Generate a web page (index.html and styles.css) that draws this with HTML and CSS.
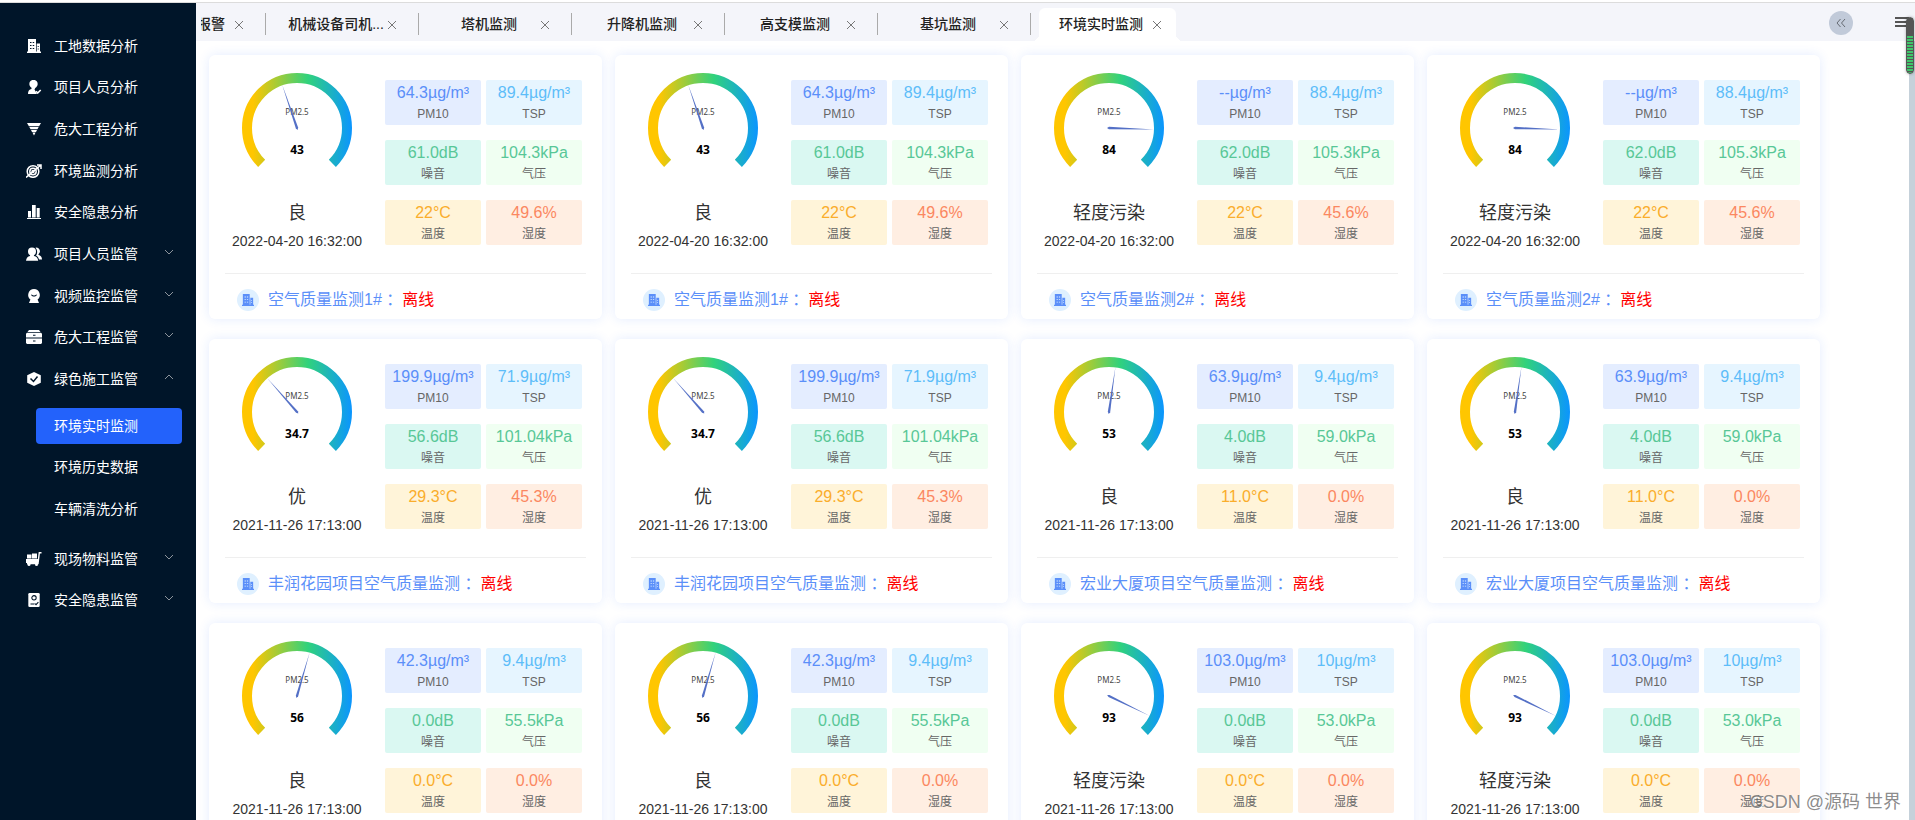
FILE: index.html
```html
<!DOCTYPE html>
<html lang="zh-CN">
<head>
<meta charset="utf-8">
<title>环境实时监测</title>
<link rel="stylesheet" href="styles.css">
</head>
<body>
<svg class="defs" aria-hidden="true">
  <defs>
    <linearGradient id="dial" gradientUnits="userSpaceOnUse" x1="5" y1="0" x2="115" y2="0">
      <stop offset="0.1" stop-color="#ffc600"/>
      <stop offset="0.6" stop-color="#30d27c"/>
      <stop offset="1" stop-color="#0b95ff"/>
    </linearGradient>
    <symbol id="i-building" viewBox="0 0 14 14">
      <path fill="currentColor" fill-rule="evenodd" d="M1 0h8v12.500h.7V4.500H13v8h1V14H0v-1.500h1zM3 3v1h1.500V3zm2.700 0v1h1.500V3zM3 6v1h1.500V6zm2.700 0v1h1.500V6zM3 9v1h1.500V9zm2.700 0v1h1.500V9zM10.700 7v1h1V7zm0 2.500v1h1v-1z"/>
    </symbol>
    <symbol id="i-usercheck" viewBox="0 0 14 14">
      <circle cx="6.500" cy="4" r="4.200" fill="currentColor"/>
      <path fill="currentColor" d="M4.500 7.500h4L7.500 9.500 10 14H1c0-3 1.200-4.500 3.500-5z"/>
      <path fill="none" stroke="currentColor" stroke-width="1.600" d="M9 11.300l1.700 1.700 3-3"/>
    </symbol>
    <symbol id="i-funnel" viewBox="0 0 14 14">
      <path fill="currentColor" d="M0 1h14l-1.900 3.200H1.900zM2.300 4.900h9.400L10.400 7.200H3.600zM4 7.900h6L9 9.900H5zM5.400 10.600h3.200L7 13.500z"/>
    </symbol>
    <symbol id="i-target" viewBox="0 0 16 14">
      <g fill="none" stroke="currentColor" stroke-width="1.500">
        <circle cx="7" cy="7.500" r="5.800"/><circle cx="7" cy="7.500" r="3.200"/><circle cx="7" cy="7.500" r="1"/>
        <path d="M0 13.500L15 1M11 1h4v4"/>
      </g>
    </symbol>
    <symbol id="i-bars" viewBox="0 0 14 14">
      <path fill="currentColor" d="M1 6h3v6.500H1zM5 0h3.700v12.500H5zM9.700 3h3v9.500h-3zM0 13h14v1H0z"/>
    </symbol>
    <symbol id="i-users" viewBox="0 0 16 14">
      <path fill="currentColor" d="M9.500 .7a3.600 3.600 0 0 1 3.300 6.100l-.5 1c2.500.8 3.700 2.200 3.700 4.700h-3c-.5-2-1.500-3-3-3.700 1.500-2 1.700-6-.5-8.100z"/>
      <circle cx="6" cy="4.500" r="4" fill="currentColor"/>
      <path fill="currentColor" d="M4.200 7.500h3.600L8 9c2.500.6 4 2 4.200 4.700H0C.3 11 1.700 9.600 4 9z"/>
    </symbol>
    <symbol id="i-camera" viewBox="0 0 14 14">
      <path fill="currentColor" fill-rule="evenodd" d="M7 0a5.900 5.900 0 0 1 3.600 10.500L12 14H2l1.400-3.500A5.900 5.900 0 0 1 7 0zM4 5.500c.5 2.700 5.500 2.700 6 0l-1 .3c-1 1-3 1-4 0z"/>
    </symbol>
    <symbol id="i-drawer" viewBox="0 0 16 14">
      <path fill="currentColor" fill-rule="evenodd" d="M3 0h10l1.500 2h-13zM1 2.800h14l1 1v3.700H0V3.800zm6 2v1h2.500v-1zM0 8.500h16V13l-1 1H1l-1-1zm7 2v1h2.500v-1z"/>
    </symbol>
    <symbol id="i-hex" viewBox="0 0 14 14">
      <path fill="currentColor" d="M7 0l6.800 3.300v7.400L7 14 .2 10.700V3.300z"/>
      <path fill="none" stroke="#001529" stroke-width="1.500" d="M3.500 6.500l3 3 4-5"/>
    </symbol>
    <symbol id="i-cart" viewBox="0 0 16 14">
      <path fill="currentColor" d="M1 2.500h4.500v4H1zM6 1.500h5v5H6zM0 7h12v4H0z"/>
      <path fill="none" stroke="currentColor" stroke-width="1.400" d="M15.500.7h-2.200L12 11.500H1"/>
      <circle cx="3" cy="12.500" r="1.500" fill="currentColor"/><circle cx="10.500" cy="12.500" r="1.500" fill="currentColor"/>
    </symbol>
    <symbol id="i-badge" viewBox="0 0 14 16">
      <rect x="0.500" y="0" width="13" height="16" rx="1.500" fill="currentColor"/>
      <circle cx="7" cy="5.500" r="2.500" fill="none" stroke="#001529" stroke-width="1.200"/>
      <path fill="none" stroke="#001529" stroke-width="1.200" d="M3 12.500h4.500M8 12l1.300 1.300L12 10.500"/>
    </symbol>
    <symbol id="i-down" viewBox="0 0 10 6"><path fill="none" stroke="currentColor" d="M1 1l4 4 4-4"/></symbol>
    <symbol id="i-up" viewBox="0 0 10 6"><path fill="none" stroke="currentColor" d="M1 5l4-4 4 4"/></symbol>
    <symbol id="i-close" viewBox="0 0 10 10"><path fill="none" stroke="currentColor" d="M1 1l8 8M9 1L1 9"/></symbol>
  </defs>
</svg>

<div class="app">
  <nav class="sidebar" aria-label="主菜单">
    <ul class="menu menu-main">
      <li><a class="item" href="#"><svg class="ico"><use href="#i-building"/></svg><span>工地数据分析</span></a></li>
      <li><a class="item" href="#"><svg class="ico"><use href="#i-usercheck"/></svg><span>项目人员分析</span></a></li>
      <li><a class="item" href="#"><svg class="ico"><use href="#i-funnel"/></svg><span>危大工程分析</span></a></li>
      <li><a class="item" href="#"><svg class="ico"><use href="#i-target"/></svg><span>环境监测分析</span></a></li>
      <li><a class="item" href="#"><svg class="ico"><use href="#i-bars"/></svg><span>安全隐患分析</span></a></li>
      <li><button class="item" type="button"><svg class="ico"><use href="#i-users"/></svg><span>项目人员监管</span><svg class="chev"><use href="#i-down"/></svg></button></li>
      <li><button class="item" type="button"><svg class="ico"><use href="#i-camera"/></svg><span>视频监控监管</span><svg class="chev"><use href="#i-down"/></svg></button></li>
      <li><button class="item" type="button"><svg class="ico"><use href="#i-drawer"/></svg><span>危大工程监管</span><svg class="chev"><use href="#i-down"/></svg></button></li>
      <li><button class="item" type="button" aria-expanded="true"><svg class="ico"><use href="#i-hex"/></svg><span>绿色施工监管</span><svg class="chev"><use href="#i-up"/></svg></button></li>
    </ul>
    <ul class="menu menu-sub">
      <li><a class="sub active" href="#" aria-current="page">环境实时监测</a></li>
      <li><a class="sub" href="#">环境历史数据</a></li>
      <li><a class="sub" href="#">车辆清洗分析</a></li>
    </ul>
    <ul class="menu menu-more">
      <li><button class="item" type="button"><svg class="ico"><use href="#i-cart"/></svg><span>现场物料监管</span><svg class="chev"><use href="#i-down"/></svg></button></li>
      <li><button class="item" type="button"><svg class="ico"><use href="#i-badge"/></svg><span>安全隐患监管</span><svg class="chev"><use href="#i-down"/></svg></button></li>
    </ul>
  </nav>

  <div class="page">
    <header class="tabbar">
      <div class="tabs">
        <div class="tab tab-cut"><a class="tab-label" href="#">报警</a><button class="close" type="button" aria-label="关闭"><svg><use href="#i-close"/></svg></button></div>
        <div class="tab"><a class="tab-label" href="#">机械设备司机...</a><button class="close" type="button" aria-label="关闭"><svg><use href="#i-close"/></svg></button></div>
        <div class="tab"><a class="tab-label" href="#">塔机监测</a><button class="close" type="button" aria-label="关闭"><svg><use href="#i-close"/></svg></button></div>
        <div class="tab"><a class="tab-label" href="#">升降机监测</a><button class="close" type="button" aria-label="关闭"><svg><use href="#i-close"/></svg></button></div>
        <div class="tab"><a class="tab-label" href="#">高支模监测</a><button class="close" type="button" aria-label="关闭"><svg><use href="#i-close"/></svg></button></div>
        <div class="tab"><a class="tab-label" href="#">基坑监测</a><button class="close" type="button" aria-label="关闭"><svg><use href="#i-close"/></svg></button></div>
        <div class="tab tab-active"><a class="tab-label" href="#" aria-current="page">环境实时监测</a><button class="close" type="button" aria-label="关闭"><svg><use href="#i-close"/></svg></button></div>
      </div>
      <button class="collapse" type="button" aria-label="收起"><svg viewBox="0 0 10 10"><path d="M4.500 1L1 5l3.500 4M9 1L5.500 5 9 9"/></svg></button>
      <button class="burger" type="button" aria-label="菜单"><svg viewBox="0 0 14 12"><path d="M0 2h14M0 6h14M0 10h14"/></svg></button>
    </header>
    <main class="cards" id="cards"></main>
    <div class="track"></div>
    <div class="thumb"></div>
    <div class="watermark">CSDN @源码 世界</div>
  </div>
</div>
<script src="script.js"></script>
</body>
</html>
```

FILE: styles.css
```css
* { box-sizing: border-box; }

body {
  margin: 0;
  font-family: "Liberation Sans", "Noto Sans CJK SC", sans-serif;
  font-size: 14px;
  line-height: 20px;
  color: #333;
  background: #fff;
}

a { color: inherit; text-decoration: none; }

button {
  padding: 0;
  border: 0;
  background: none;
  font: inherit;
  color: inherit;
  cursor: pointer;
}

.defs { position: absolute; width: 0; height: 0; }

.app {
  display: flex;
  height: 100vh;
  padding-top: 3px;
  overflow: hidden;
  background: linear-gradient(#fff 2px, #dcdcdc 2px, #dcdcdc 3px, #fff 3px);
}

/* Sidebar */
.sidebar {
  flex: 0 0 196px;
  padding-top: 22px;
  background: #001529;
  color: #fff;
}

.menu {
  display: grid;
  grid-auto-rows: 1fr;
  margin: 0;
  padding: 0;
  list-style: none;
}

.menu-main { height: 375px; }
.menu-sub { height: 125px; margin: 5px 0 8px; }
.menu-more { height: 83px; }
.menu li { display: flex; align-items: center; }

.item {
  display: flex;
  align-items: center;
  width: 100%;
  padding: 0 22px 0 26px;
  text-align: left;
}

.ico { flex: 0 0 16px; height: 14px; margin-right: 12px; }
.chev { width: 10px; height: 6px; margin: 0 0 4px auto; color: #8d949c; }

.sub {
  flex: 1;
  margin: 0 14px 0 36px;
  padding: 8px 18px;
  border-radius: 4px;
}

.sub.active { background: #2362fb; }

/* Tab bar */
.page {
  position: relative;
  display: flex;
  flex: 1;
  flex-direction: column;
  min-width: 0;
}

.tabbar {
  display: flex;
  flex: 0 0 38px;
  align-items: center;
  padding: 0 6px 0 5px;
  background: #f4f5fa;
}

.tabs { display: flex; flex: 1; align-self: stretch; min-width: 0; }

.tab {
  position: relative;
  display: flex;
  flex: 0 0 153px;
  align-items: center;
  padding: 5px 20px 0 21px;
}

.tab::after {
  content: "";
  position: absolute;
  top: 10px;
  right: 0;
  width: 1px;
  height: 22px;
  background: #aaa;
}

.tab-label {
  flex: 0 0 98px;
  padding-bottom: 1px;
  font-weight: 500;
  text-align: center;
  white-space: nowrap;
  color: #222;
}

.tab-cut { flex-basis: 65px; padding-left: 0; }

.tab-cut .tab-label {
  display: flex;
  flex-basis: 24px;
  justify-content: flex-end;
  overflow: hidden;
  margin-right: 7px;
}

.close { display: flex; flex: 0 0 14px; justify-content: center; color: #777; }
.close svg { width: 10px; height: 10px; }

.tab-active {
  flex-basis: 137px;
  margin: 5px 8px 0;
  padding: 0 12px 0 13px;
  border-radius: 6px 6px 0 0;
  background: #fff;
}

.tab-active::before,
.tab-active::after {
  content: "";
  position: absolute;
  top: auto;
  bottom: 0;
  width: 7px;
  height: 7px;
}

.tab-active::before {
  left: -7px;
  background: radial-gradient(circle at 0 0, #f4f5fa 7px, #fff 7px);
}

.tab-active::after {
  right: -7px;
  background: radial-gradient(circle at 100% 0, #f4f5fa 7px, #fff 7px);
}

.collapse {
  width: 24px;
  height: 24px;
  margin: 2px 42px 0 0;
  border-radius: 50%;
  background: #c1cad9;
}

.collapse svg { display: block; width: 10px; height: 10px; margin: auto; }
.collapse path { fill: none; stroke: #666b73; }
.burger { width: 14px; height: 16px; }
.burger svg { display: block; width: 14px; height: 12px; }
.burger path { stroke: #555; stroke-width: 2; }

/* Cards */
.cards {
  display: grid;
  flex: 1;
  grid-template-columns: repeat(4, 1fr);
  grid-auto-rows: 264px;
  gap: 20px 13px;
  min-height: 0;
  padding: 14px 95px 0 13px;
  overflow: hidden;
}

.card {
  display: flex;
  flex-direction: column;
  padding: 13px 16px 8px;
  border-radius: 6px;
  background: #fff;
  box-shadow: 0 0 12px rgba(35, 98, 251, .12);
}

.card-body {
  display: flex;
  flex: 1;
  justify-content: space-between;
  padding-right: 4px;
  border-bottom: 1px solid #efefef;
}

.summary { flex: 1; text-align: center; }
.gauge { display: block; width: 120px; height: 120px; margin: 0 auto; }
.dial { fill: none; stroke: url(#dial); stroke-width: 10; }
.needle { fill: #5470c6; }

.gauge text { font-family: "Noto Sans", "Open Sans", sans-serif; text-anchor: middle; }
.gauge .caption { font-size: 8px; fill: #464646; }
.gauge .reading { font-size: 12px; font-weight: 700; fill: #000; }

.level { margin-top: 12px; font-size: 18px; line-height: 26px; }
.time { margin-top: 5px; white-space: nowrap; }

.tiles {
  display: grid;
  grid-template-columns: 96px 96px;
  grid-auto-rows: 45px;
  gap: 15px 5px;
  margin: 12px 0 0 16px;
}

.tile { padding-top: 3px; border-radius: 2px; text-align: center; }
.tile b { display: block; font-size: 16px; font-weight: 400; line-height: 20px; }
.tile span { display: block; font-size: 12px; line-height: 22px; color: #666; }

.pm10 { background: #e4edff; color: #5b8ff9; }
.tsp { background: #e6f5ff; color: #5dbdf9; }
.noise { background: #daf8f2; color: #58c797; }
.press { background: #f0fff2; color: #58c797; }
.temp { background: #fff4d9; color: #faad2b; }
.humid { background: #ffeee2; color: #fb8760; }

.card-foot {
  display: flex;
  align-items: center;
  padding: 15px 12px 0;
  font-size: 16px;
  line-height: 22px;
  color: #5b8ff9;
}

.badge {
  display: grid;
  flex: 0 0 22px;
  place-items: center;
  height: 22px;
  margin-right: 9px;
  border-radius: 50%;
  background: #dff0ff;
}

.badge svg { width: 12px; height: 12px; }
.name { white-space: pre; }
.state { color: #f00; }

/* Overlays */
.track {
  position: absolute;
  top: 38px;
  right: 0;
  bottom: 0;
  width: 6px;
  background: #c5d1da;
}

.thumb {
  position: absolute;
  top: 14px;
  right: 1px;
  width: 8px;
  height: 57px;
  border: 1px solid #555;
  border-radius: 4px;
  background:
    linear-gradient(#555, #555) top / 100% 17px no-repeat,
    repeating-linear-gradient(#3fc66b 0 2px, #555 2px 3px);
  box-shadow: 0 0 3px rgba(0, 0, 0, .3);
}

.watermark {
  position: absolute;
  right: 14px;
  bottom: 6px;
  font-size: 18px;
  line-height: 24px;
  color: rgba(110, 110, 110, .8);
  text-shadow: 1px 1px 1px #fff;
}
```

FILE: script.js
```js
const stations = [
  { pm25: 43, level: "良", time: "2022-04-20 16:32:00", pm10: "64.3", tsp: "89.4", noise: "61.0", press: "104.3", temp: "22", humid: "49.6", name: "空气质量监测1#" },
  { pm25: 84, level: "轻度污染", time: "2022-04-20 16:32:00", pm10: "--", tsp: "88.4", noise: "62.0", press: "105.3", temp: "22", humid: "45.6", name: "空气质量监测2#" },
  { pm25: 34.7, level: "优", time: "2021-11-26 17:13:00", pm10: "199.9", tsp: "71.9", noise: "56.6", press: "101.04", temp: "29.3", humid: "45.3", name: "丰润花园项目空气质量监测" },
  { pm25: 53, level: "良", time: "2021-11-26 17:13:00", pm10: "63.9", tsp: "9.4", noise: "4.0", press: "59.0", temp: "11.0", humid: "0.0", name: "宏业大厦项目空气质量监测" },
  { pm25: 56, level: "良", time: "2021-11-26 17:13:00", pm10: "42.3", tsp: "9.4", noise: "0.0", press: "55.5", temp: "0.0", humid: "0.0" },
  { pm25: 93, level: "轻度污染", time: "2021-11-26 17:13:00", pm10: "103.0", tsp: "10", noise: "0.0", press: "53.0", temp: "0.0", humid: "0.0" }
];

const metrics = [
  ["pm10", "µg/m³", "PM10"],
  ["tsp", "µg/m³", "TSP"],
  ["noise", "dB", "噪音"],
  ["press", "kPa", "气压"],
  ["temp", "°C", "温度"],
  ["humid", "%", "湿度"]
];

// The dial sweeps 270 degrees clockwise, starting at the lower left.
function gauge(value) {
  const turn = -225 + 2.7 * value;
  return `<svg class="gauge" viewBox="0 0 120 120" role="img" aria-label="PM2.5 ${value}">
    <path class="dial" d="M24.640 95.360A50 50 0 1 1 95.360 95.360"/>
    <text class="caption" x="60" y="47">PM2.5</text>
    <path class="needle" d="M105 60L60 61.200L58 60L60 58.800Z" transform="rotate(${turn} 60 60)"/>
    <text class="reading" x="60" y="86">${value}</text>
  </svg>`;
}

function footer(name) {
  if (!name) return "";
  return `<span class="badge"><svg><use href="#i-building"/></svg></span><span class="name">${name} ：</span><span class="state">离线</span>`;
}

function card(s) {
  const tiles = metrics.map(([key, unit, label]) =>
    `<div class="tile ${key}"><b>${s[key]}${unit}</b><span>${label}</span></div>`).join("");
  return `<article class="card">
    <div class="card-body">
      <div class="summary">${gauge(s.pm25)}<div class="level">${s.level}</div><div class="time">${s.time}</div></div>
      <div class="tiles">${tiles}</div>
    </div>
    <div class="card-foot">${footer(s.name)}</div>
  </article>`;
}

document.getElementById("cards").innerHTML = stations.map(s => card(s) + card(s)).join("");
```
